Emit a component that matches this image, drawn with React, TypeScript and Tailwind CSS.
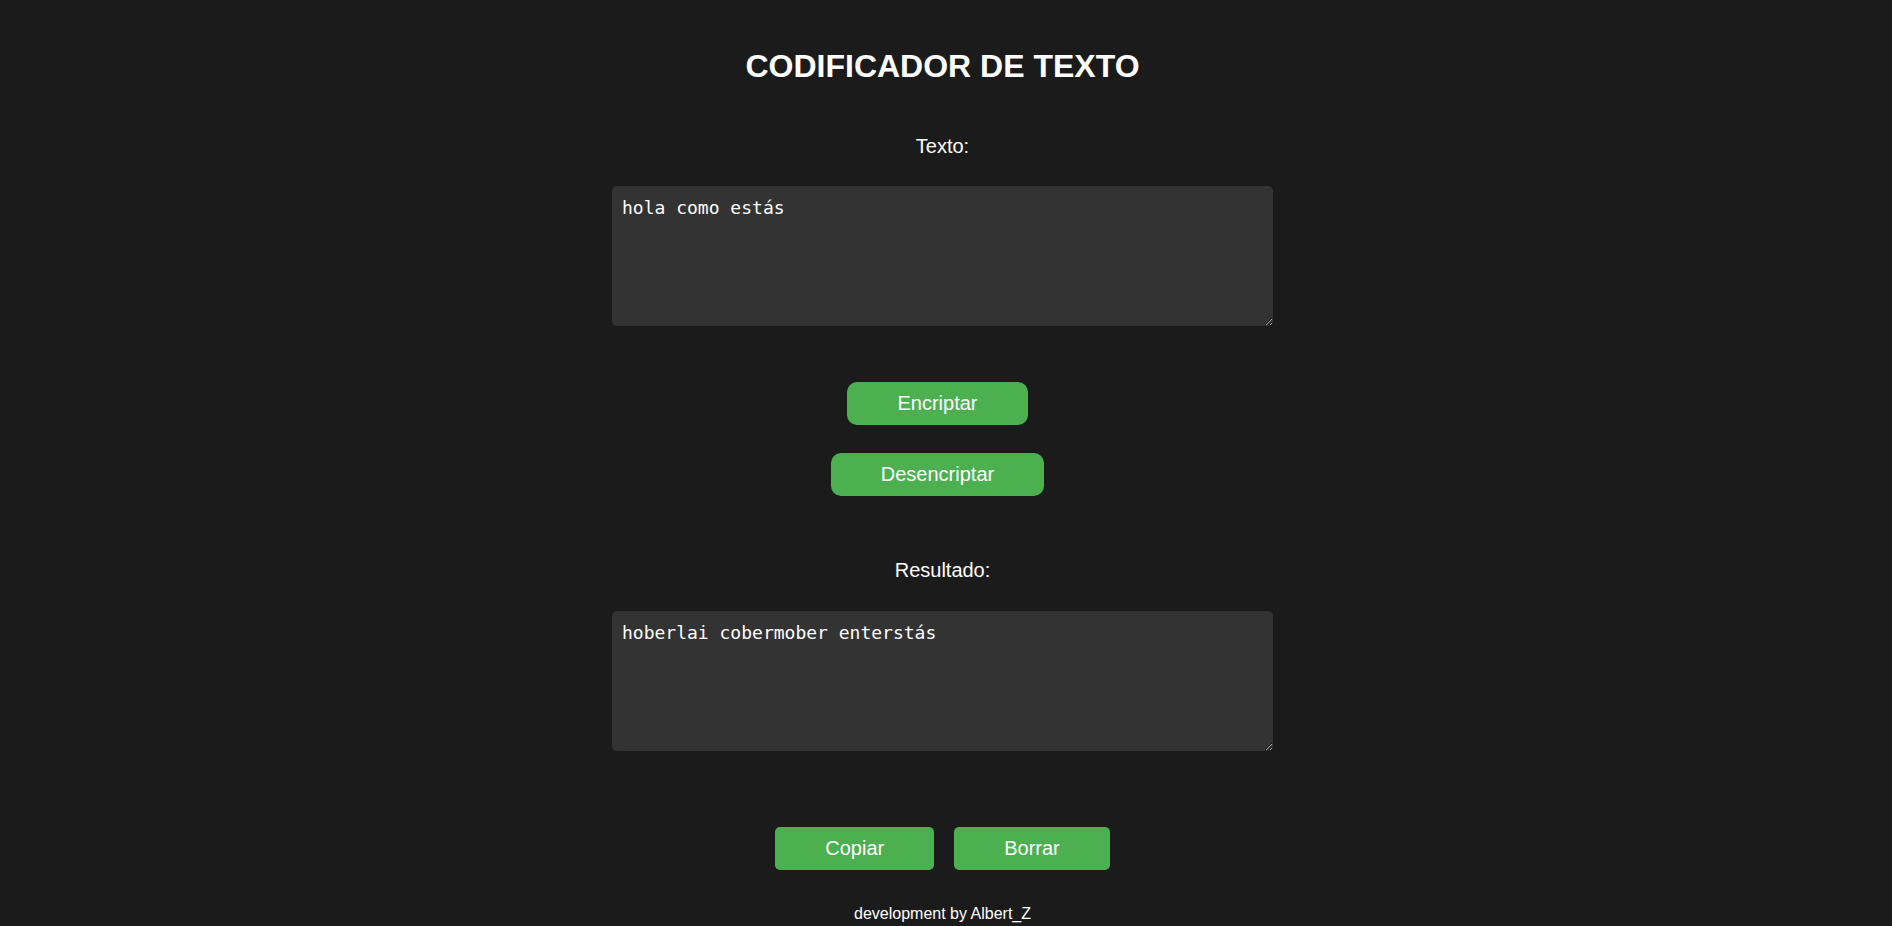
import { useState } from "react";

const vowels: Record<string, string> = {
  e: "enter",
  i: "imes",
  a: "ai",
  o: "ober",
  u: "ufat",
};

function encode(text: string) {
  return text.replace(/[eiaou]/g, (c) => vowels[c]);
}

function decode(text: string) {
  let out = text;
  for (const [k, v] of Object.entries(vowels)) out = out.split(v).join(k);
  return out;
}

function Label({ children, className }: { children: React.ReactNode; className: string }) {
  return <label className={`text-[20px] leading-[23px] text-white ${className}`}>{children}</label>;
}

function Area({
  value,
  onChange,
  readOnly,
  className,
}: {
  value: string;
  onChange?: (v: string) => void;
  readOnly?: boolean;
  className: string;
}) {
  return (
    <textarea
      value={value}
      readOnly={readOnly}
      onChange={(e) => onChange?.(e.target.value)}
      className={`block h-[140px] w-[661px] rounded-[5px] bg-[#333333] pt-[11px] px-[10px] text-[18px] leading-[21px] text-white outline-none font-['DejaVu_Sans_Mono',monospace] ${className}`}
    />
  );
}

export default function App() {
  const [text, setText] = useState("hola como estás");
  const [result, setResult] = useState("hoberlai cobermober enterstás");

  return (
    <div className="min-h-screen bg-[#1b1b1b] font-['Liberation_Sans',Arial,sans-serif] text-white">
      <div className="flex w-[1885px] flex-col items-center">
        <h1 className="mt-[48px] text-[32px] font-bold leading-[37px]">CODIFICADOR DE TEXTO</h1>

        <Label className="mt-[50px]">Texto:</Label>
        <Area value={text} onChange={setText} className="mt-[28px]" />

        <button
          onClick={() => setResult(encode(text))}
          className="mt-[56px] mr-[10px] rounded-[10px] bg-[#4caf50] px-[50px] py-[10px] text-[20px] leading-[23px] text-white"
        >
          Encriptar
        </button>
        <button
          onClick={() => setResult(decode(text))}
          className="mt-[28px] mr-[10px] rounded-[10px] bg-[#4caf50] px-[50px] py-[10px] text-[20px] leading-[23px] text-white"
        >
          Desencriptar
        </button>

        <Label className="mt-[63px]">Resultado:</Label>
        <Area value={result} readOnly className="mt-[29px]" />

        <div className="mt-[76px] flex gap-[20px]">
          <button
            onClick={() => navigator.clipboard?.writeText(result)}
            className="rounded-[5px] bg-[#4caf50] px-[50px] py-[10px] text-[20px] leading-[23px] text-white"
          >
            Copiar
          </button>
          <button
            onClick={() => {
              setText("");
              setResult("");
            }}
            className="rounded-[5px] bg-[#4caf50] px-[50px] py-[10px] text-[20px] leading-[23px] text-white"
          >
            Borrar
          </button>
        </div>

        <p className="mt-[35px] text-[16px] leading-[18px] text-white">development by Albert_Z</p>
      </div>
    </div>
  );
}
